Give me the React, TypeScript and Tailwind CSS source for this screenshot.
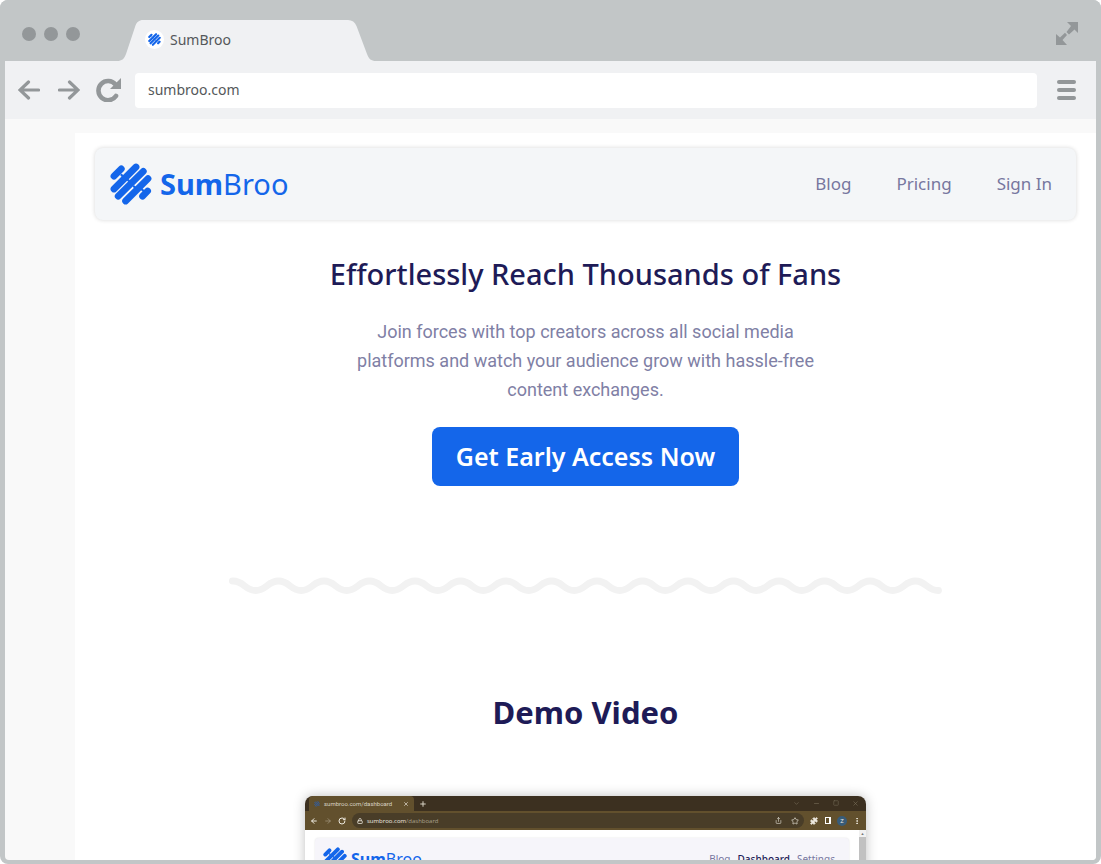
import { ArrowLeft, ArrowRight, ChevronDown, Lock, Minus, MoreVertical, Plus, Puzzle, RotateCw, Share, Square, Star, X } from "lucide-react";

function LogoMark({ className }: { className: string }) {
  return (
    <svg viewBox="0 0 42 42" className={className} fill="none" stroke="#1466ea" strokeWidth="6.8" strokeLinecap="round" aria-hidden="true">
      <path d="M11.300 5.800 4 13.200M26 4 4 26M33.300 8.300 8.200 33.200M38 15.600 15.600 38M37.600 28 32.600 33.200" />
      <path d="M11.500 12 12.500 13M18 17 19 18M24 23.500 25 24.500M32 26.500 33 27.500" strokeWidth="2.400" />
    </svg>
  );
}

function TitleBar() {
  return (
    <div className="flex h-[61px] shrink-0 items-end bg-[#c2c6c7]">
      <div className="flex h-[54px] w-[117px] items-center gap-2 pl-[22px]">
        <span className="size-[14px] rounded-full bg-[#939799]" />
        <span className="size-[14px] rounded-full bg-[#939799]" />
        <span className="size-[14px] rounded-full bg-[#939799]" />
      </div>
      <div className="relative flex h-[41px] w-[262px] items-center gap-[6px] pb-[2px] pl-[28px]">
        <svg viewBox="0 0 262 41" className="absolute inset-0 size-full" aria-hidden="true">
          <path d="M0 41C5 41 7 39 9 34L18 7C19.500 2 22 0 26 0H231C235 0 238 2 239.500 6L250 34C252 39 254 41 259 41Z" fill="#f0f1f3" />
        </svg>
        <span className="relative flex size-[19px] items-center justify-center rounded-full bg-white">
          <LogoMark className="size-[13px]" />
        </span>
        <span className="relative text-sm text-[#54585a]">SumBroo</span>
      </div>
      <button type="button" aria-label="Expand window" className="mr-[23px] mb-[16px] ml-auto">
        <svg viewBox="0 0 22 23" className="h-[23px] w-[22px]" fill="#939799" aria-hidden="true">
          <path d="M11 0H22V11L18.500 7.500 13 12.500 10.500 10 15 4ZM0 12 4 15.500 9 10.800 11 13 6.500 18 11 23H0Z" />
        </svg>
      </button>
    </div>
  );
}

function AddressBar() {
  return (
    <div className="mx-[5px] flex h-[58px] shrink-0 items-center bg-[#f0f1f3] pr-[20px] pl-[13px]">
      <div className="flex w-[117px] items-center">
        <button type="button" aria-label="Back" className="mr-[18px]">
          <svg viewBox="0 0 22 20" className="h-[20px] w-[22px]" fill="none" stroke="#939799" strokeWidth="3.200" strokeLinecap="round" aria-hidden="true">
            <path d="M20.500 10H3M10.500 2 2 10 10.500 18" />
          </svg>
        </button>
        <button type="button" aria-label="Forward" className="mr-[16px]">
          <svg viewBox="0 0 22 20" className="h-[20px] w-[22px]" fill="none" stroke="#939799" strokeWidth="3.200" strokeLinecap="round" aria-hidden="true">
            <path d="M1.500 10H19M11.500 2 20 10 11.500 18" />
          </svg>
        </button>
        <button type="button" aria-label="Reload">
          <svg viewBox="0 0 26 24" className="h-[24px] w-[26px]" aria-hidden="true">
            <path d="M19.500 6.500A9.600 9.600 0 1 0 20 18" fill="none" stroke="#939799" strokeWidth="4.600" strokeLinecap="round" />
            <path d="M25 0V11H14Z" fill="#939799" />
          </svg>
        </button>
      </div>
      <input aria-label="Address" defaultValue="sumbroo.com" className="h-[35px] min-w-0 flex-1 rounded bg-white px-[13px] pb-[2px] text-sm text-[#54585a] outline-none" />
      <button type="button" aria-label="Menu" className="ml-[20px] flex w-[19px] flex-col gap-1">
        <span className="h-1 rounded-full bg-[#939799]" />
        <span className="h-1 rounded-full bg-[#939799]" />
        <span className="h-1 rounded-full bg-[#939799]" />
      </button>
    </div>
  );
}

function SiteHeader() {
  return (
    <header className="mx-5 flex h-[72px] items-center justify-between rounded-lg bg-[#f4f6f8] pr-6 pl-[15px] shadow-[0_0_4px_rgba(0,0,0,0.16)]">
      <a href="#home" className="flex items-center gap-2 text-[29px] leading-9 text-[#1466ea]">
        <LogoMark className="size-[42px]" />
        <span><b className="font-bold">Sum</b>Broo</span>
      </a>
      <nav className="flex gap-[45px] text-[17px] text-[#77779f]">
        <a href="#blog">Blog</a>
        <a href="#pricing">Pricing</a>
        <a href="#signin">Sign In</a>
      </nav>
    </header>
  );
}

function Divider() {
  const waves = Array.from({ length: 15 }, (_, i) => {
    const x = 4 + i * 45.5;
    return `C${x + 11} 4 ${x + 12} 13.500 ${x + 22.7} 13.500S${x + 34.500} 4 ${x + 45.5} 4`;
  });
  return (
    <svg viewBox="0 0 714 19" className="mt-[91px] h-[19px] w-[714px] max-w-full" fill="none" stroke="#f2f2f2" strokeWidth="6.800" strokeLinecap="round" aria-hidden="true">
      <path d={`M3.400 4H4${waves.join("")}C697 4 698 13.500 709.500 13.500`} />
    </svg>
  );
}

function DemoVideo() {
  return (
    <div className="mt-[64px] w-[561px] max-w-full shrink-0 overflow-hidden rounded-t-lg bg-white text-[6px] leading-[8px] shadow-[0_0_12px_rgba(0,0,0,0.25)]">
      <div className="flex h-[15px] items-center bg-[#3c3020] text-[#d8d2c4]">
        <div className="ml-1 flex h-full w-[105px] items-center gap-1 rounded-t bg-[#62502d] px-[5px]">
          <LogoMark className="size-[6px] opacity-60" />
          <span className="font-['Roboto',sans-serif]">sumbroo.com/dashboard</span>
          <X className="ml-auto size-[6px]" strokeWidth={3} />
        </div>
        <Plus className="ml-[5px] size-2" strokeWidth={3} />
        <div className="mr-[7px] ml-auto flex gap-[13px] text-[#7b705c]">
          <ChevronDown className="size-[7px]" />
          <Minus className="size-[7px]" />
          <Square className="size-[6px]" />
          <X className="size-[7px]" />
        </div>
      </div>
      <div className="flex h-[19px] items-center bg-[#62502d] pr-[5px] pl-[5px] text-[#eeeae0]">
        <div className="flex w-[42px] gap-[6px]">
          <ArrowLeft className="size-2" strokeWidth={3} />
          <ArrowRight className="size-2 opacity-50" />
          <RotateCw className="size-2" strokeWidth={3} />
        </div>
        <div className="flex h-[15px] flex-1 items-center gap-1 rounded-full bg-[#493d28] px-[5px]">
          <Lock className="size-[6px]" strokeWidth={3} />
          <span className="font-['Open_Sans',sans-serif]">sumbroo.com<span className="text-[#aaa18e]">/dashboard</span></span>
          <Share className="mr-[5px] ml-auto size-[7px]" />
          <Star className="size-[8px]" />
        </div>
        <Puzzle className="ml-[6px] size-2" fill="currentColor" />
        <span className="ml-[7px] h-[7px] w-[6px] border border-r-2 border-white" />
        <span className="mx-[6px] flex size-[10px] items-center justify-center rounded-full bg-[#385c79]">Z</span>
        <MoreVertical className="size-2" strokeWidth={3} />
      </div>
      <div className="flex h-[80px]">
        <div className="mx-[10px] mt-2 flex h-[42px] flex-1 items-center justify-between rounded bg-[#f6f5fa] pr-[14px] pl-2 shadow-[0_0_2px_rgba(0,0,0,0.12)]">
          <div className="flex items-center gap-1 text-[16px] leading-5 text-[#1466ea]">
            <LogoMark className="size-[24px]" />
            <span><b>Sum</b>Broo</span>
          </div>
          <div className="flex gap-[7px] text-[10px] text-[#77779f]">
            <span>Blog</span>
            <span className="font-medium text-[#1e1b57]">Dashboard</span>
            <span>Settings</span>
          </div>
        </div>
        <div className="flex w-[7px] flex-col bg-[#f1f1f1]">
          <span className="h-[7px] text-center text-[4px] text-[#777]">▲</span>
          <span className="flex-1 bg-[#c1c1c1]" />
        </div>
      </div>
    </div>
  );
}

export default function App() {
  return (
    <div className="h-screen bg-white font-['Noto_Sans',sans-serif]">
      <div className="flex h-full flex-col overflow-hidden rounded-lg bg-[#c2c6c7] pb-1">
        <TitleBar />
        <AddressBar />
        <div className="mx-[5px] min-h-0 flex-1 overflow-hidden rounded-b bg-[#f9f9f9] pt-[14px] pl-[70px]">
          <div className="min-h-full bg-white pt-[15px]">
            <SiteHeader />
            <main className="flex flex-col items-center text-center">
              <h1 className="mt-[34px] text-[29px] leading-10 font-medium text-[#1e1b57]">Effortlessly Reach Thousands of Fans</h1>
              <p className="mt-[23px] w-[480px] max-w-full font-['Roboto',sans-serif] text-lg leading-[29px] text-[#8080a5]">
                Join forces with top creators across all social media platforms and watch your audience grow with hassle-free content exchanges.
              </p>
              <button type="button" className="mt-[23px] h-[59px] rounded-lg bg-[#1466ea] px-6 text-[25px] font-semibold text-white">
                Get Early Access Now
              </button>
              <Divider />
              <h2 className="mt-[96px] text-[31px] leading-10 font-bold text-[#1e1b57]">Demo Video</h2>
              <DemoVideo />
            </main>
          </div>
        </div>
      </div>
    </div>
  );
}
